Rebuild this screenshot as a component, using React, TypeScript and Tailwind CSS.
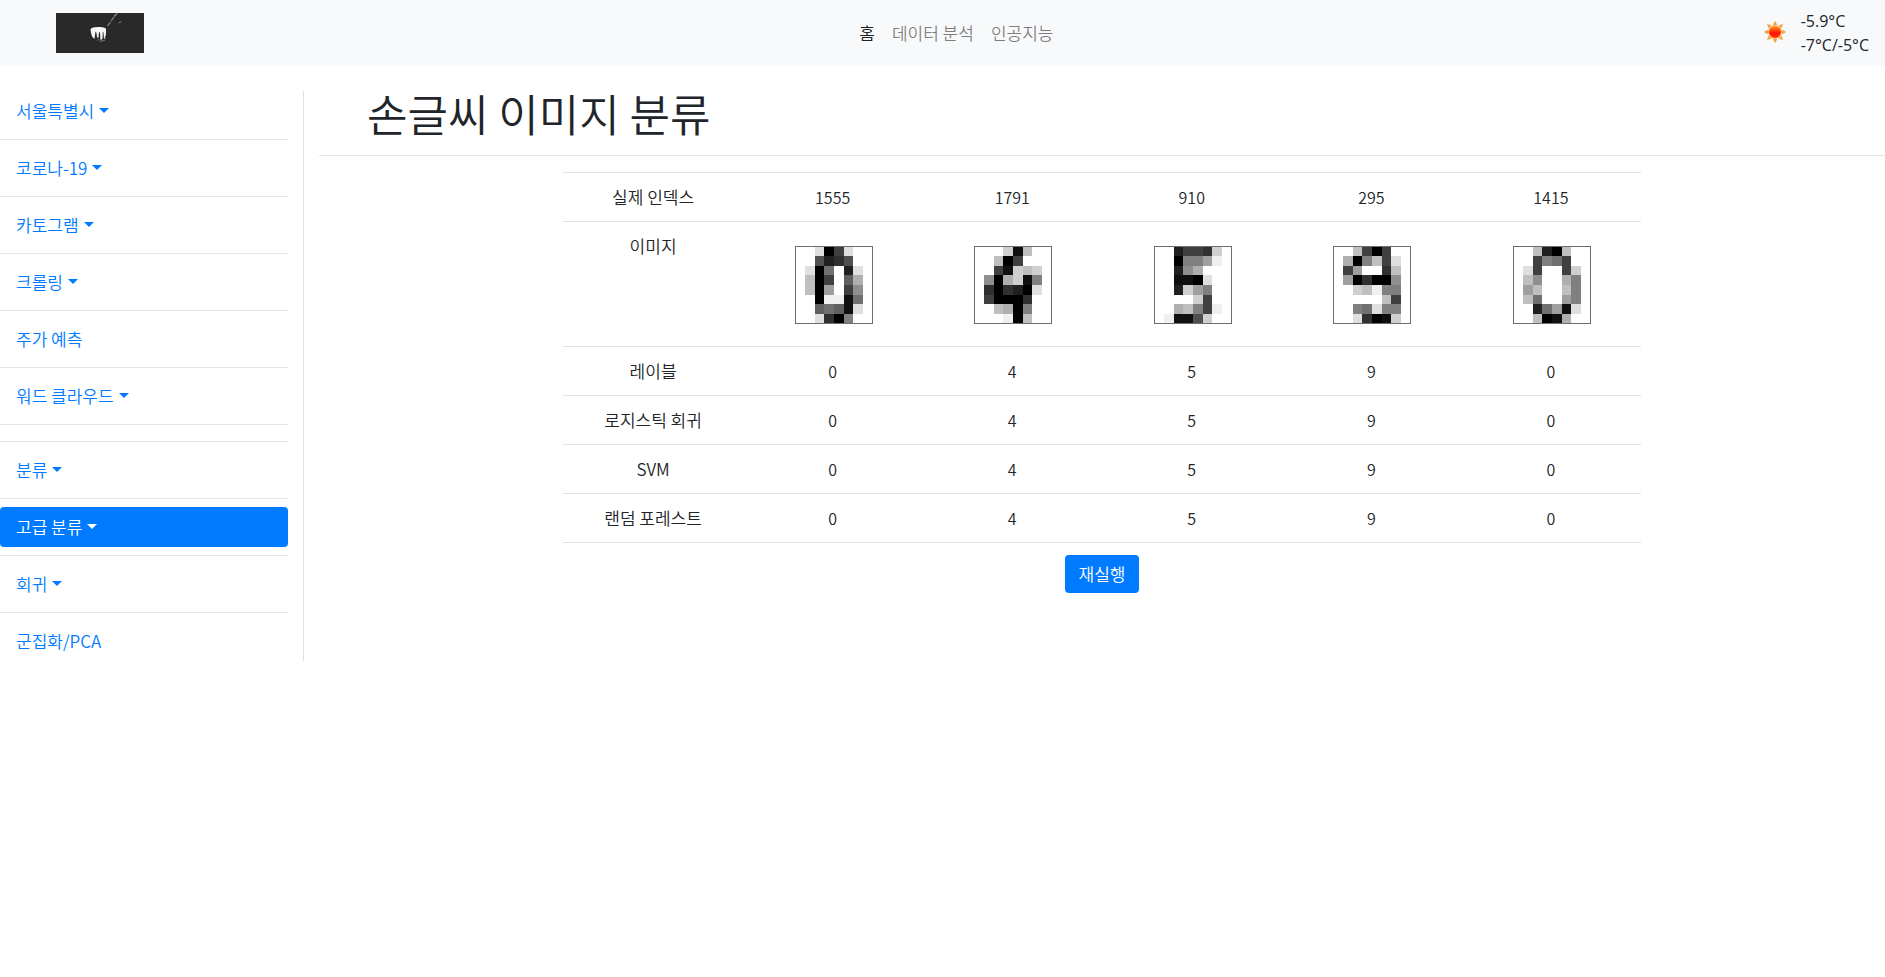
type Grid = number[][];

type Sample = {
  index: number;
  label: number;
  logistic: number;
  svm: number;
  forest: number;
  pixels: Grid;
};

const samples: Sample[] = [
  {
    index: 1555, label: 0, logistic: 0, svm: 0, forest: 0,
    pixels: [
      [0, 0, 2, 16, 12, 2, 0, 0],
      [0, 0, 11, 14, 13, 11, 0, 0],
      [0, 2, 16, 9, 0, 14, 2, 0],
      [0, 4, 16, 12, 0, 10, 5, 0],
      [0, 4, 16, 6, 0, 12, 7, 0],
      [0, 0, 16, 1, 1, 15, 9, 0],
      [0, 0, 10, 9, 10, 15, 2, 0],
      [0, 0, 2, 13, 16, 8, 0, 0],
    ],
  },
  {
    index: 1791, label: 4, logistic: 4, svm: 4, forest: 4,
    pixels: [
      [0, 0, 0, 3, 15, 4, 0, 0],
      [0, 0, 4, 16, 12, 0, 0, 0],
      [0, 0, 12, 15, 3, 4, 3, 0],
      [0, 7, 16, 5, 3, 15, 8, 0],
      [0, 13, 16, 13, 14, 16, 2, 0],
      [0, 12, 16, 16, 16, 13, 0, 0],
      [0, 0, 4, 5, 16, 8, 0, 0],
      [0, 0, 0, 1, 16, 4, 0, 0],
    ],
  },
  {
    index: 910, label: 5, logistic: 5, svm: 5, forest: 5,
    pixels: [
      [0, 0, 14, 12, 12, 13, 3, 0],
      [0, 0, 16, 8, 8, 6, 1, 0],
      [0, 0, 14, 7, 5, 0, 0, 0],
      [0, 0, 15, 15, 16, 2, 0, 0],
      [0, 0, 14, 3, 6, 8, 0, 0],
      [0, 0, 0, 0, 3, 12, 0, 0],
      [0, 0, 5, 4, 8, 12, 1, 0],
      [0, 1, 15, 15, 11, 3, 0, 0],
    ],
  },
  {
    index: 295, label: 9, logistic: 9, svm: 9, forest: 9,
    pixels: [
      [0, 0, 4, 12, 16, 12, 0, 0],
      [0, 5, 16, 8, 4, 12, 2, 0],
      [0, 12, 6, 0, 0, 13, 4, 0],
      [0, 6, 16, 13, 16, 16, 7, 0],
      [0, 0, 3, 4, 1, 8, 8, 0],
      [0, 0, 0, 0, 0, 4, 12, 0],
      [0, 0, 8, 9, 2, 8, 8, 0],
      [0, 0, 2, 13, 16, 15, 3, 0],
    ],
  },
  {
    index: 1415, label: 0, logistic: 0, svm: 0, forest: 0,
    pixels: [
      [0, 0, 4, 14, 16, 4, 0, 0],
      [0, 0, 12, 8, 9, 12, 0, 0],
      [0, 2, 12, 0, 0, 12, 3, 0],
      [0, 4, 7, 0, 0, 5, 8, 0],
      [0, 6, 4, 0, 0, 4, 8, 0],
      [0, 4, 9, 0, 0, 6, 8, 0],
      [0, 0, 14, 9, 6, 15, 2, 0],
      [0, 0, 4, 16, 15, 5, 0, 0],
    ],
  },
];

type Row = { name: string; key: "label" | "logistic" | "svm" | "forest" };

const resultRows: Row[] = [
  { name: "레이블", key: "label" },
  { name: "로지스틱 회귀", key: "logistic" },
  { name: "SVM", key: "svm" },
  { name: "랜덤 포레스트", key: "forest" },
];

type MenuItem = { name: string; menu?: boolean; active?: boolean };

const menuGroups: MenuItem[][] = [
  [
    { name: "서울특별시", menu: true },
    { name: "코로나-19", menu: true },
    { name: "카토그램", menu: true },
    { name: "크롤링", menu: true },
    { name: "주가 예측" },
    { name: "워드 클라우드", menu: true },
  ],
  [
    { name: "분류", menu: true },
    { name: "고급 분류", menu: true, active: true },
    { name: "회귀", menu: true },
    { name: "군집화/PCA" },
  ],
];

function Digit({ pixels, label }: { pixels: Grid; label: number }) {
  const cell = 77 / 8;
  return (
    <svg viewBox="0 0 100 100" className="mx-auto block size-[100px]" role="img" aria-label={String(label)}>
      {pixels.map((row, y) =>
        row.map((value, x) => {
          if (value === 0) return null;
          const shade = Math.round(255 - (value / 16) * 255);
          return (
            <rect
              key={`${y}-${x}`}
              x={12.5 + x * cell}
              y={12.5 + y * cell}
              width={cell}
              height={cell}
              fill={`rgb(${shade},${shade},${shade})`}
              shapeRendering="crispEdges"
            />
          );
        }),
      )}
      <rect x="12.500" y="12.500" width="77" height="77" fill="none" stroke="#6e6e6e" shapeRendering="crispEdges" />
    </svg>
  );
}

function Logo() {
  return (
    <svg viewBox="0 0 88 40" className="h-10 w-[88px]" aria-hidden="true">
      <rect width="88" height="40" fill="#292929" />
      <path d="M51.500 13L54.500 9M55 8L58 4M58 3.500L61 0.500" stroke="#909090" strokeWidth="1.200" fill="none" />
      <path d="M62.500 10L65.500 8.600" stroke="#808080" strokeWidth="1" />
      <path d="M41 27h2M44 28.500l5-1.500M48 25.500h2" stroke="#777" strokeWidth="1.200" />
      <path
        d="M34.500 16Q36 14 42 14Q48 13.500 50 15.500L50 21Q49.500 24.500 48 26L47.500 19.500L46.800 18.500L46.500 25.500L44.500 27.500L44 19.500L43 19L42.300 25.500L41 24L40.500 20L39.500 18.500L38.500 26Q35.500 24 35 20Z"
        fill="#f5f5f5"
      />
    </svg>
  );
}

const rayAngles = [0, 45, 90, 135, 180, 225, 270, 315];

function Sun() {
  return (
    <svg viewBox="0 0 44 44" className="size-11" role="img" aria-label="맑음">
      <defs>
        <linearGradient id="sun-core" x1="0" y1="0" x2="0" y2="1">
          <stop offset="0" stopColor="#ffa030" />
          <stop offset="0.35" stopColor="#ff4a10" />
          <stop offset="0.6" stopColor="#ff1200" />
          <stop offset="1" stopColor="#ff3a08" />
        </linearGradient>
      </defs>
      {rayAngles.map((angle) => (
        <path key={angle} d="M19.800 13.800L22 9.800L24.200 13.800Q22 15 19.800 13.800Z" fill="#f3a545" transform={`rotate(${angle} 22 21)`} />
      ))}
      <circle cx="22" cy="21" r="6.300" fill="url(#sun-core)" stroke="#ffb04a" strokeWidth="0.800" />
    </svg>
  );
}

function Caret() {
  return (
    <svg viewBox="0 0 10 5" className="mb-0.5 ml-[5px] h-[5px] w-[10px]" aria-hidden="true">
      <path d="M0 0H10L5 5Z" fill="currentColor" />
    </svg>
  );
}

function SideItem({ item }: { item: MenuItem }) {
  const look = item.active ? "bg-[#007bff] text-white" : "text-[#007bff]";
  const box = "flex h-10 w-full items-center rounded px-4 text-left";
  return item.menu ? (
    <button type="button" aria-haspopup="menu" className={`${box} ${look}`}>
      {item.name}
      <Caret />
    </button>
  ) : (
    <a href="#" className={`${box} ${look}`}>
      {item.name}
    </a>
  );
}

export default function App() {
  return (
    <div className="min-h-screen bg-white font-['Noto_Sans_CJK_KR',sans-serif] text-[17px] leading-6 font-[350] text-[#212529]">
      <header className="flex h-[66px] items-center justify-between bg-[#f8f9fa] pr-4 pl-14">
        <a href="#" aria-label="처음으로" className="mr-4">
          <Logo />
        </a>
        <nav className="flex gap-[17px]">
          <a href="#" className="text-black/90">홈</a>
          <a href="#" className="text-black/50">데이터 분석</a>
          <a href="#" className="text-black/50">인공지능</a>
        </nav>
        <div className="flex items-center gap-1">
          <Sun />
          <p className="font-['Open_Sans',sans-serif] text-base leading-6 font-normal">
            -5.9°C
            <br />
            -7°C/-5°C
          </p>
        </div>
      </header>

      <div className="flex items-start pt-[25px]">
        <aside className="w-[304px] shrink-0 border-r border-[#dee2e6] pr-[15px]">
          {menuGroups.map((group, g) => (
            <ul key={g} className={g > 0 ? "mt-4 border-t border-black/10 pt-2" : ""}>
              {group.map((item, i) => {
                const last = g === menuGroups.length - 1 && i === group.length - 1;
                return (
                  <li key={item.name} className={last ? "" : "mb-2 border-b border-black/10 pb-2"}>
                    <SideItem item={item} />
                  </li>
                );
              })}
            </ul>
          ))}
        </aside>

        <main className="ml-[15px] min-w-0 flex-1">
          <h1 className="border-b border-black/10 pb-5 pl-12 text-[44px] leading-[44px]">손글씨 이미지 분류</h1>
          <div className="mx-auto mt-4 w-[68.8%] text-center">
            <table className="w-full table-fixed border-collapse border-b border-[#dee2e6]">
              <tbody>
                <tr className="border-t border-[#dee2e6]">
                  <th scope="row" className="py-3 font-[350]">실제 인덱스</th>
                  {samples.map((s) => (
                    <td key={s.index} className="py-3 text-base">{s.index}</td>
                  ))}
                </tr>
                <tr className="border-t border-[#dee2e6]">
                  <th scope="row" className="py-3 align-top font-[350]">이미지</th>
                  {samples.map((s) => (
                    <td key={s.index} className="py-3">
                      <Digit pixels={s.pixels} label={s.label} />
                    </td>
                  ))}
                </tr>
                {resultRows.map((row) => (
                  <tr key={row.key} className="border-t border-[#dee2e6]">
                    <th scope="row" className="py-3 font-[350]">{row.name}</th>
                    {samples.map((s) => (
                      <td key={s.index} className="py-3 text-base">{s[row.key]}</td>
                    ))}
                  </tr>
                ))}
              </tbody>
            </table>
            <button type="button" className="mt-3 h-[38px] rounded bg-[#007bff] px-[14px] text-white">
              재실행
            </button>
          </div>
        </main>
      </div>
    </div>
  );
}
